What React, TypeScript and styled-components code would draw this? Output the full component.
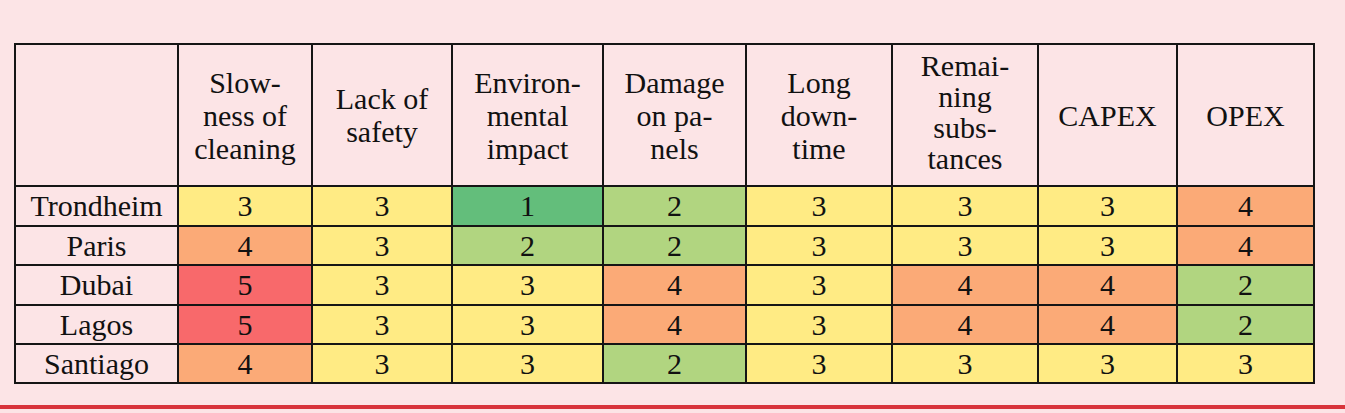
import React from 'react'
import styled, { createGlobalStyle } from 'styled-components'

const GlobalStyle = createGlobalStyle`
  html, body {
    margin: 0;
    padding: 0;
    background: #fce4e6;
  }
`

const scaleColors: Record<number, string> = {
  1: '#63be7b',
  2: '#b1d580',
  3: '#ffeb84',
  4: '#fbaa77',
  5: '#f8696b'
}

const columns: { lines: string[]; width: number }[] = [
  { lines: ['Slow-', 'ness of', 'cleaning'], width: 134 },
  { lines: ['Lack of', 'safety'], width: 140 },
  { lines: ['Environ-', 'mental', 'impact'], width: 151 },
  { lines: ['Damage', 'on pa-', 'nels'], width: 143 },
  { lines: ['Long', 'down-', 'time'], width: 146 },
  { lines: ['Remai-', 'ning', 'subs-', 'tances'], width: 146 },
  { lines: ['CAPEX'], width: 139 },
  { lines: ['OPEX'], width: 137 }
]

const rows: { city: string; scores: number[]; height: number }[] = [
  { city: 'Trondheim', scores: [3, 3, 1, 2, 3, 3, 3, 4], height: 40 },
  { city: 'Paris', scores: [4, 3, 2, 2, 3, 3, 3, 4], height: 39 },
  { city: 'Dubai', scores: [5, 3, 3, 4, 3, 4, 4, 2], height: 40 },
  { city: 'Lagos', scores: [5, 3, 3, 4, 3, 4, 4, 2], height: 39 },
  { city: 'Santiago', scores: [4, 3, 3, 2, 3, 3, 3, 3], height: 39 }
]

const App: React.FC = () => {
  return (
    <>
      <GlobalStyle />
      <S.Page>
        <S.TableWrap>
          <S.Table>
            <colgroup>
              <col style={{ width: 163 }} />
              {columns.map((c, i) => (
                <col key={i} style={{ width: c.width }} />
              ))}
            </colgroup>
            <thead>
              <tr>
                <S.HeadCell />
                {columns.map((c, i) => (
                  <S.HeadCell key={i} $tall={c.lines.length > 3}>
                    {c.lines.map((l, j) => (
                      <S.Line key={j}>{l}</S.Line>
                    ))}
                  </S.HeadCell>
                ))}
              </tr>
            </thead>
            <tbody>
              {rows.map((r) => (
                <S.Row key={r.city} $height={r.height}>
                  <S.CityCell>{r.city}</S.CityCell>
                  {r.scores.map((s, i) => (
                    <S.ScoreCell key={i} $score={s}>
                      {s}
                    </S.ScoreCell>
                  ))}
                </S.Row>
              ))}
            </tbody>
          </S.Table>
        </S.TableWrap>
        <S.RedRule />
      </S.Page>
    </>
  )
}

export default App

const S = {
  Page: styled.div`
    width: 1345px;
    height: 413px;
    background: #fce4e6;
    font-family: 'Liberation Serif', 'Times New Roman', serif;
    color: #111;
    display: flex;
    flex-direction: column;
    overflow: hidden;
  `,
  TableWrap: styled.div`
    padding: 43px 0 0 14px;
    height: 362px;
  `,
  Table: styled.table`
    border-collapse: collapse;
    table-layout: fixed;
    width: 1301px;
    border: 2px solid #151515;
  `,
  HeadCell: styled.th<{ $tall?: boolean }>`
    height: ${(p) => (p.$tall ? '134px' : '140px')};
    padding: 0 0 ${(p) => (p.$tall ? '6px' : '0')};
    border: 2px solid #151515;
    font-weight: 400;
    font-size: 30px;
    line-height: ${(p) => (p.$tall ? '31px' : '33px')};
    text-align: center;
    vertical-align: middle;
    background: #fce4e6;
  `,
  Line: styled.div`
    white-space: nowrap;
  `,
  Row: styled.tr<{ $height: number }>`
    height: ${(p) => p.$height}px;
  `,
  CityCell: styled.td`
    padding: 0;
    border: 2px solid #151515;
    font-size: 30px;
    line-height: 34px;
    text-align: center;
    vertical-align: middle;
    background: #fce4e6;
  `,
  ScoreCell: styled.td<{ $score: number }>`
    padding: 0;
    border: 2px solid #151515;
    font-size: 30px;
    line-height: 34px;
    text-align: center;
    vertical-align: middle;
    background: ${(p) => scaleColors[p.$score]};
  `,
  RedRule: styled.div`
    height: 4px;
    background: #d8333b;
  `
}
